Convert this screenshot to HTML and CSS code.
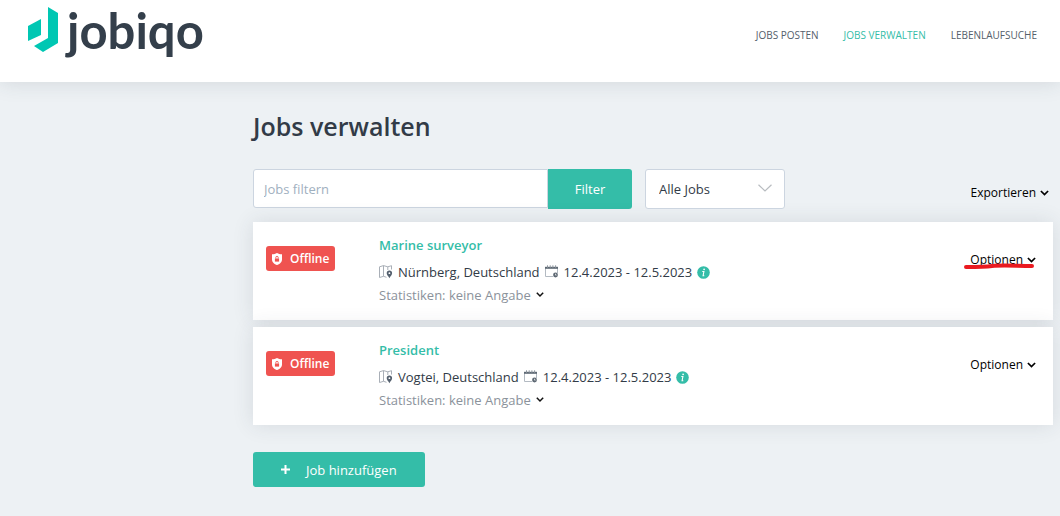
FILE: index.html
```
<!DOCTYPE html>
<html lang="de">
<head>
    <meta charset="UTF-8">
    <meta name="viewport" content="width=device-width, initial-scale=1.0">
    <title>Jobs verwalten</title>
    <link rel="stylesheet" href="styles.css">
</head>
<body>
    <!-- Shared icons -->
    <svg class="sprite" aria-hidden="true">
        <symbol id="chevron" viewBox="0 0 8 8">
            <path d="M0.8 1.8 L4 5 L7.2 1.8" fill="none" stroke="currentColor" stroke-width="1.5"/>
        </symbol>
        <symbol id="shield" viewBox="0 0 10 12">
            <path d="M5 0 C6.5 0.9 8 1.3 10 1.3 V6.5 C10 9.5 7.5 11.3 5 12 C2.5 11.3 0 9.5 0 6.5 V1.3 C2 1.3 3.5 0.9 5 0 Z" fill="#fff"/>
            <path d="M3.8 5.5 V4.5 A1.2 1.2 0 0 1 6.2 4.5 V5.5" fill="none" stroke="#ef5350" stroke-width="0.9"/>
            <path d="M2.9 5.5 H7.1 V8.6 H2.9 Z" fill="#ef5350"/>
        </symbol>
        <symbol id="map" viewBox="0 0 14 14">
            <path d="M0.5 1.8 L4.5 0.6 L8.8 1.8 L12.5 0.7 V4.5 M0.5 1.8 V12.5 L4.5 11.3 L7.5 12.3 M4.5 0.6 V11.3 M8.8 1.8 V5" fill="none" stroke="#a9afb7" stroke-width="1"/>
            <path d="M10.4 5.6 A2.7 2.7 0 0 1 13.1 8.3 C13.1 10.2 11.3 11.3 10.4 13.2 C9.5 11.3 7.7 10.2 7.7 8.3 A2.7 2.7 0 0 1 10.4 5.6 Z" fill="#55616f"/>
            <circle cx="10.4" cy="8.2" r="0.9" fill="#fff"/>
        </symbol>
        <symbol id="calendar" viewBox="0 0 14 14">
            <path d="M0.5 3 V11.5 H8 M12.5 3 V8" fill="none" stroke="#b3bac2" stroke-width="1"/>
            <path d="M0 1.8 H13 V3.8 H0 Z" fill="#5d6873"/>
            <path d="M2.5 0.3 V2.8 M5.2 0.3 V2.8 M7.9 0.3 V2.8 M10.6 0.3 V2.8" stroke="#8d959e" stroke-width="1"/>
            <circle cx="10.5" cy="10" r="2.4" fill="#5d6873"/>
            <path d="M10.5 8.7 V10.1 H11.6" fill="none" stroke="#fff" stroke-width="0.7"/>
        </symbol>
        <symbol id="info" viewBox="0 0 13 13">
            <circle cx="6.5" cy="6.5" r="6.3" fill="#34bda8"/>
            <circle cx="7.1" cy="3.3" r="0.9" fill="#fff"/>
            <path d="M5.3 5.5 H6.9 L6.1 9.7 H7.3" fill="none" stroke="#fff" stroke-width="1.1"/>
        </symbol>
    </svg>

    <header class="site-header">
        <a href="#" class="logo" aria-label="jobiqo">
            <svg class="logo-mark" viewBox="0 0 30 46" aria-hidden="true">
                <path d="M20 0 L30 6 V36 L15 45 L6 39 L20 31 Z" fill="#00c7b3"/>
                <path d="M0 19 L13 12 V28 L0 34 Z" fill="#00c7b3"/>
            </svg>
            <span class="logo-text">jobiqo</span>
        </a>
        <nav class="main-nav">
            <a href="#">Jobs posten</a>
            <a href="#" class="active">Jobs verwalten</a>
            <a href="#">Lebenlaufsuche</a>
        </nav>
    </header>

    <main class="content">
        <h1>Jobs verwalten</h1>

        <div class="toolbar">
            <form class="filter-form">
                <input type="text" class="filter-input" placeholder="Jobs filtern" aria-label="Jobs filtern">
                <button type="submit" class="btn filter-btn">Filter</button>
            </form>
            <div class="select-wrap">
                <select class="job-select" aria-label="Jobs anzeigen">
                    <option>Alle Jobs</option>
                </select>
                <svg class="select-arrow" viewBox="0 0 14 8" aria-hidden="true">
                    <path d="M0.5 0.7 L7 7 L13.5 0.7" fill="none" stroke="#b8bcc0" stroke-width="1.2"/>
                </svg>
            </div>
            <button type="button" class="dropdown export">Exportieren <svg class="chevron"><use href="#chevron"/></svg></button>
        </div>

        <div class="job-list">
            <article class="job">
                <div class="job-status">
                    <span class="badge"><svg class="shield"><use href="#shield"/></svg>Offline</span>
                </div>
                <div class="job-info">
                    <h2><a href="#">Marine surveyor</a></h2>
                    <div class="job-meta">
                        <svg class="icon"><use href="#map"/></svg>
                        <span>Nürnberg, Deutschland</span>
                        <svg class="icon"><use href="#calendar"/></svg>
                        <span>12.4.2023 - 12.5.2023</span>
                        <button type="button" class="info-btn" aria-label="Info"><svg><use href="#info"/></svg></button>
                    </div>
                    <button type="button" class="stats">Statistiken: keine Angabe <svg class="chevron"><use href="#chevron"/></svg></button>
                </div>
                <div class="job-options">
                    <button type="button" class="dropdown">Optionen <svg class="chevron"><use href="#chevron"/></svg></button>
                    <svg class="marker" viewBox="0 0 72 8" aria-hidden="true">
                        <path d="M3 5 C12 5 22 5 29 4 C40 3 54 4 69 4" fill="none" stroke="#ea1a20" stroke-width="4" stroke-linecap="round"/>
                    </svg>
                </div>
            </article>

            <article class="job">
                <div class="job-status">
                    <span class="badge"><svg class="shield"><use href="#shield"/></svg>Offline</span>
                </div>
                <div class="job-info">
                    <h2><a href="#">President</a></h2>
                    <div class="job-meta">
                        <svg class="icon"><use href="#map"/></svg>
                        <span>Vogtei, Deutschland</span>
                        <svg class="icon"><use href="#calendar"/></svg>
                        <span>12.4.2023 - 12.5.2023</span>
                        <button type="button" class="info-btn" aria-label="Info"><svg><use href="#info"/></svg></button>
                    </div>
                    <button type="button" class="stats">Statistiken: keine Angabe <svg class="chevron"><use href="#chevron"/></svg></button>
                </div>
                <div class="job-options">
                    <button type="button" class="dropdown">Optionen <svg class="chevron"><use href="#chevron"/></svg></button>
                </div>
            </article>
        </div>

        <button type="button" class="btn add-btn">
            <svg class="plus" viewBox="0 0 9 9" aria-hidden="true"><path d="M4.5 0 V9 M0 4.5 H9" stroke="#fff" stroke-width="2"/></svg>
            Job hinzufügen
        </button>
    </main>
</body>
</html>
```

FILE: styles.css
```
* {
    box-sizing: border-box;
}

body {
    margin: 0;
    min-height: 100vh;
    background-color: #edf1f4;
    color: #323b47;
    font-family: "Open Sans", "Noto Sans", sans-serif;
    font-size: 13px;
    line-height: 22px;
}

button,
input,
select {
    font: inherit;
}

button {
    border: none;
    padding: 0;
    background: none;
    cursor: pointer;
}

a {
    color: inherit;
    text-decoration: none;
}

.sprite {
    display: none;
}

/* Header */
.site-header {
    display: flex;
    justify-content: space-between;
    height: 82px;
    padding: 7px 23px 0 28px;
    background-color: #fff;
    box-shadow: 0 0 20px rgba(50, 59, 71, 0.15);
}

.logo {
    display: flex;
    align-items: flex-start;
    gap: 9px;
}

.logo-mark {
    width: 30px;
    height: 46px;
}

.logo-text {
    color: #343f4b;
    font-family: Lato, sans-serif;
    font-size: 49px;
    font-weight: 700;
    line-height: 46px;
}

.main-nav {
    display: flex;
    gap: 25px;
    padding-top: 17px;
    color: #55606b;
    font-size: 10px;
    text-transform: uppercase;
}

.main-nav .active {
    color: #34bda8;
}

/* Page content */
.content {
    padding: 26px 7px 29px 253px;
}

h1 {
    margin: 0 0 25px;
    font-size: 25px;
    font-weight: 600;
    line-height: 36px;
}

.btn {
    border-radius: 3px;
    background-color: #34bda8;
    color: #fff;
    font-weight: 500;
}

.toolbar {
    display: flex;
    gap: 13px;
    margin-bottom: 13px;
}

.filter-form {
    display: flex;
    flex: 0 1 379px;
    height: 40px;
}

.filter-input {
    flex: 1;
    min-width: 0;
    height: 39px;
    padding: 0 10px;
    border: 1px solid #ccd5e0;
    border-radius: 3px 0 0 3px;
    background-color: #fff;
}

.filter-input::placeholder {
    color: #9fb0c0;
}

.filter-btn {
    width: 84px;
    border-radius: 0 3px 3px 0;
}

.select-wrap {
    position: relative;
    width: 140px;
}

.job-select {
    width: 100%;
    height: 40px;
    padding: 0 13px;
    border: 1px solid #ccd5e0;
    border-radius: 3px;
    background-color: #fff;
    color: #323b47;
    appearance: none;
}

.select-arrow {
    position: absolute;
    top: 15px;
    right: 13px;
    width: 14px;
    height: 8px;
    pointer-events: none;
}

.dropdown {
    display: inline-flex;
    align-items: center;
    gap: 4px;
    color: #000;
    font-size: 12px;
    font-weight: 500;
}

.chevron {
    width: 9px;
    height: 9px;
}

.export {
    align-self: flex-end;
    margin: 0 4px 5px auto;
}

/* Job cards */
.job-list {
    display: flex;
    flex-direction: column;
    gap: 7px;
}

.job {
    display: grid;
    grid-template-columns: 100px 1fr auto;
    column-gap: 13px;
    padding: 12px 17px 13px 13px;
    background-color: #fff;
    box-shadow: 0 0 20px rgba(50, 59, 71, 0.12);
}

.job-status {
    padding-top: 12px;
}

.badge {
    display: inline-flex;
    align-items: center;
    gap: 8px;
    height: 25px;
    padding: 0 6px;
    border-radius: 3px;
    background-color: #ef5350;
    color: #fff;
    font-size: 12px;
    font-weight: 600;
}

.shield {
    width: 10px;
    height: 12px;
}

.job-info h2 {
    margin: 0 0 5px;
    color: #34bda8;
    font-size: 13px;
    font-weight: 600;
    line-height: 22px;
}

.job-meta {
    display: flex;
    align-items: center;
    gap: 5px;
}

.icon {
    width: 14px;
    height: 14px;
}

.info-btn,
.info-btn svg {
    display: block;
    width: 13px;
    height: 13px;
}

.stats {
    display: flex;
    align-items: center;
    gap: 5px;
    height: 24px;
    color: #8b929b;
}

.stats .chevron {
    width: 8px;
    height: 8px;
    color: #111;
}

.job-options {
    position: relative;
    padding-top: 14px;
}

/* Red pen stroke under the first options menu */
.marker {
    position: absolute;
    top: 28px;
    right: 1px;
    width: 72px;
    height: 8px;
    pointer-events: none;
}

.add-btn {
    display: flex;
    align-items: center;
    gap: 16px;
    height: 35px;
    margin-top: 27px;
    padding: 0 28px;
}

.plus {
    width: 9px;
    height: 9px;
}
```
